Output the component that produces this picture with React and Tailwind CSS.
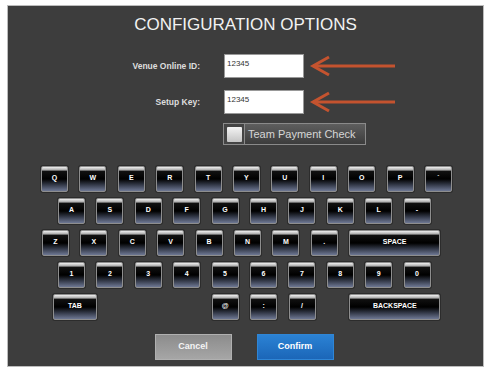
import React from "react";

const row1 = ["Q", "W", "E", "R", "T", "Y", "U", "I", "O", "P", "`"];
const row2 = ["A", "S", "D", "F", "G", "H", "J", "K", "L", "-"];
const row3 = ["Z", "X", "C", "V", "B", "N", "M", "."];
const row4 = ["1", "2", "3", "4", "5", "6", "7", "8", "9", "0"];

function Key({ label, wide }) {
  return (
    <div
      className={`${wide || "w-[27px]"} flex h-[26px] shrink-0 items-center justify-center rounded-[2px] border border-[#8e8e8e] bg-[linear-gradient(to_bottom,#f0f0f0_0%,#a8a8a8_13%,#111_17%,#000_50%,#2a2f3c_70%,#6e7894_100%)] pt-[1px] pb-[3px] text-[7px] font-bold text-white shadow-[0_0_0_1px_#2c2c2c]`}
    >
      {label}
    </div>
  );
}

function Arrow() {
  return (
    <svg width="88" height="22" viewBox="0 0 88 22" className="ml-[5px]">
      <path d="M4 11 H86" stroke="#c4532f" strokeWidth="3" fill="none" />
      <path d="M20 2 L4 11 L20 20" stroke="#c4532f" strokeWidth="3" fill="none" strokeLinejoin="miter" />
    </svg>
  );
}

export default function App() {
  return (
    <div className="h-[374px] w-[489px] bg-white pt-[5px] pl-[7px] font-['Liberation_Sans',Arial,sans-serif]">
      <div className="h-[362px] w-[477px] border border-[#bcbcbc] bg-[#3d3d3d]">
        {/* Title */}
        <h1 className="pt-[9px] text-center text-[17px] leading-[20px] text-[#f2f2f2]">
          CONFIGURATION OPTIONS
        </h1>

        {/* Fields */}
        <div className="mt-[19px] flex items-center">
          <div className="w-[192px] text-right text-[8.5px] font-bold text-[#dedede]">Venue Online ID:</div>
          <div className="ml-[24px] h-[24px] w-[80px] border border-[#999] bg-white pl-[2px] pt-[4px] text-[8px] leading-[10px] text-[#333]">
            12345
          </div>
          <Arrow />
        </div>
        <div className="mt-[12px] flex items-center">
          <div className="w-[192px] text-right text-[8.5px] font-bold text-[#dedede]">Setup Key:</div>
          <div className="ml-[24px] h-[24px] w-[80px] border border-[#999] bg-white pl-[2px] pt-[4px] text-[8px] leading-[10px] text-[#333]">
            12345
          </div>
          <Arrow />
        </div>

        {/* Checkbox */}
        <div className="mt-[9px] flex">
          <div className="ml-[215px] flex h-[22px] w-[143px] border border-[#8a8a8a] bg-[#444]">
            <div className="flex w-[21px] items-center justify-center border-r border-[#8a8a8a]">
              <div className="h-[15px] w-[15px] rounded-[1px] bg-[linear-gradient(to_bottom,#f4f4f4,#c4c4c4)]" />
            </div>
            <div className="flex flex-1 items-center bg-[linear-gradient(to_bottom,#5e5e5e,#3c3c3c)] pl-[3px] text-[11px] text-[#d6d6d6]">
              Team Payment Check
            </div>
          </div>
        </div>

        {/* Keyboard */}
        <div className="mt-[21px] flex flex-col gap-[6px]">
          <div className="flex gap-[11.4px] pl-[33px]">
            {row1.map((k) => (
              <Key key={k} label={k} />
            ))}
          </div>
          <div className="flex gap-[11.4px] pl-[50px]">
            {row2.map((k) => (
              <Key key={k} label={k} />
            ))}
          </div>
          <div className="flex gap-[11.4px] pl-[34px]">
            {row3.map((k) => (
              <Key key={k} label={k} />
            ))}
            <Key label="SPACE" wide="w-[91px]" />
          </div>
          <div className="flex gap-[11.4px] pl-[50px]">
            {row4.map((k) => (
              <Key key={k} label={k} />
            ))}
          </div>
          <div className="flex gap-[11.4px] pl-[45px]">
            <Key label="TAB" wide="w-[44px]" />
            <div className="w-[92px]" />
            <Key label="@" />
            <Key label=":" />
            <Key label="/" />
            <div className="w-[11px]" />
            <Key label="BACKSPACE" wide="w-[91px]" />
          </div>
        </div>

        {/* Actions */}
        <div className="mt-[14px] flex justify-center gap-[25px] pr-[3px]">
          <button className="h-[26px] w-[77px] border border-[#b0b0b0] bg-[linear-gradient(to_bottom,#8c8c8c,#a6a6a6)] text-[9px] font-bold text-[#f4f4f4]">
            Cancel
          </button>
          <button className="h-[26px] w-[77px] border border-[#2f86d6] bg-[linear-gradient(to_bottom,#2b82d4,#1b66b8)] text-[9px] font-bold text-white">
            Confirm
          </button>
        </div>
      </div>
    </div>
  );
}
